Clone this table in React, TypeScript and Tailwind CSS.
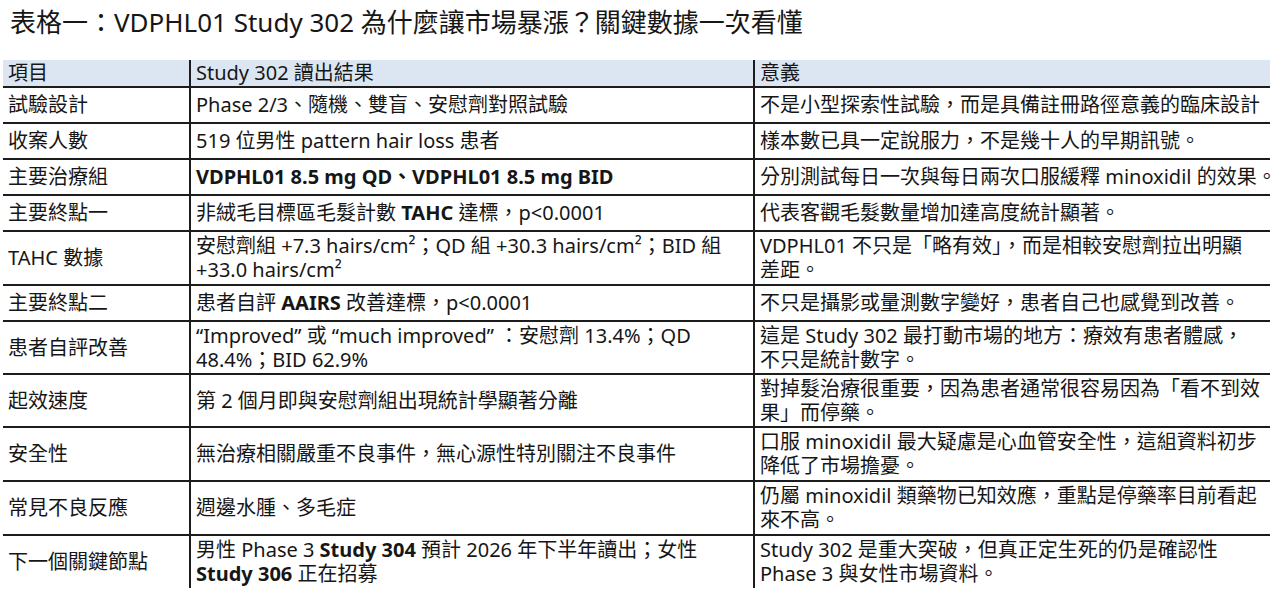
import type { ReactNode } from 'react'

type Row = {
  label: string
  result: ReactNode
  meaning: ReactNode
  h: string
}

const font = { fontFamily: '"Noto Sans", "Noto Sans CJK TC", sans-serif' }

const rows: Row[] = [
  {
    label: '試驗設計',
    result: 'Phase 2/3、隨機、雙盲、安慰劑對照試驗',
    meaning: '不是小型探索性試驗，而是具備註冊路徑意義的臨床設計',
    h: 'h-[36px]',
  },
  {
    label: '收案人數',
    result: '519 位男性 pattern hair loss 患者',
    meaning: '樣本數已具一定說服力，不是幾十人的早期訊號。',
    h: 'h-[36px]',
  },
  {
    label: '主要治療組',
    result: <b className="font-bold">VDPHL01 8.5 mg QD、VDPHL01 8.5 mg BID</b>,
    meaning: '分別測試每日一次與每日兩次口服緩釋 minoxidil 的效果。',
    h: 'h-[36px]',
  },
  {
    label: '主要終點一',
    result: (
      <>
        非絨毛目標區毛髮計數 <b className="font-bold">TAHC</b> 達標，p&lt;0.0001
      </>
    ),
    meaning: '代表客觀毛髮數量增加達高度統計顯著。',
    h: 'h-[36px]',
  },
  {
    label: 'TAHC 數據',
    result: (
      <>
        安慰劑組 +7.3 hairs/cm²；QD 組 +30.3 hairs/cm²；BID 組
        <br />
        +33.0 hairs/cm²
      </>
    ),
    meaning: (
      <>
        VDPHL01 不只是「略有效」，而是相較安慰劑拉出明顯
        <br />
        差距。
      </>
    ),
    h: 'h-[54px]',
  },
  {
    label: '主要終點二',
    result: (
      <>
        患者自評 <b className="font-bold">AAIRS</b> 改善達標，p&lt;0.0001
      </>
    ),
    meaning: '不只是攝影或量測數字變好，患者自己也感覺到改善。',
    h: 'h-[36px]',
  },
  {
    label: '患者自評改善',
    result: (
      <>
        “Improved” 或 “much improved” ：安慰劑 13.4%；QD
        <br />
        48.4%；BID 62.9%
      </>
    ),
    meaning: (
      <>
        這是 Study 302 最打動市場的地方：療效有患者體感，
        <br />
        不只是統計數字。
      </>
    ),
    h: 'h-[53px]',
  },
  {
    label: '起效速度',
    result: '第 2 個月即與安慰劑組出現統計學顯著分離',
    meaning: (
      <>
        對掉髮治療很重要，因為患者通常很容易因為「看不到效
        <br />
        果」而停藥。
      </>
    ),
    h: 'h-[53px]',
  },
  {
    label: '安全性',
    result: '無治療相關嚴重不良事件，無心源性特別關注不良事件',
    meaning: (
      <>
        口服 minoxidil 最大疑慮是心血管安全性，這組資料初步
        <br />
        降低了市場擔憂。
      </>
    ),
    h: 'h-[54px]',
  },
  {
    label: '常見不良反應',
    result: '週邊水腫、多毛症',
    meaning: (
      <>
        仍屬 minoxidil 類藥物已知效應，重點是停藥率目前看起
        <br />
        來不高。
      </>
    ),
    h: 'h-[54px]',
  },
  {
    label: '下一個關鍵節點',
    result: (
      <>
        男性 Phase 3 <b className="font-bold">Study 304</b> 預計 2026 年下半年讀出；女性
        <br />
        <b className="font-bold">Study 306</b> 正在招募
      </>
    ),
    meaning: (
      <>
        Study 302 是重大突破，但真正定生死的仍是確認性
        <br />
        Phase 3 與女性市場資料。
      </>
    ),
    h: 'h-[52px]',
  },
]

function Cell({ children, first }: { children: ReactNode; first?: boolean }) {
  return (
    <div
      className={`flex items-center whitespace-nowrap pl-[5px] text-[20px] leading-[24px] ${
        first ? '' : 'border-l-2 border-[#1c1c1c]'
      }`}
    >
      <div>{children}</div>
    </div>
  )
}

export default function App() {
  return (
    <div lang="zh-Hant-TW" className="h-[602px] w-[1280px] overflow-hidden bg-white text-[#161616]" style={font}>
      <h1 className="h-[60px] pl-[10px] pt-[4px] text-[26px] font-normal leading-[36px]">
        表格一：VDPHL01 Study 302 為什麼讓市場暴漲？關鍵數據一次看懂
      </h1>

      <div className="ml-[3px] w-[1267px]">
        <div className="grid h-[28px] grid-cols-[186px_564px_517px] border-b-2 border-[#1c1c1c] bg-[#dce6f2]">
          <Cell first>項目</Cell>
          <Cell>Study 302 讀出結果</Cell>
          <Cell>意義</Cell>
        </div>

        {rows.map((r, i) => (
          <div
            key={r.label}
            className={`grid grid-cols-[186px_564px_517px] ${r.h} ${
              i < rows.length - 1 ? 'border-b-2 border-[#1c1c1c]' : ''
            }`}
          >
            <Cell first>{r.label}</Cell>
            <Cell>{r.result}</Cell>
            <Cell>{r.meaning}</Cell>
          </div>
        ))}
      </div>
    </div>
  )
}
